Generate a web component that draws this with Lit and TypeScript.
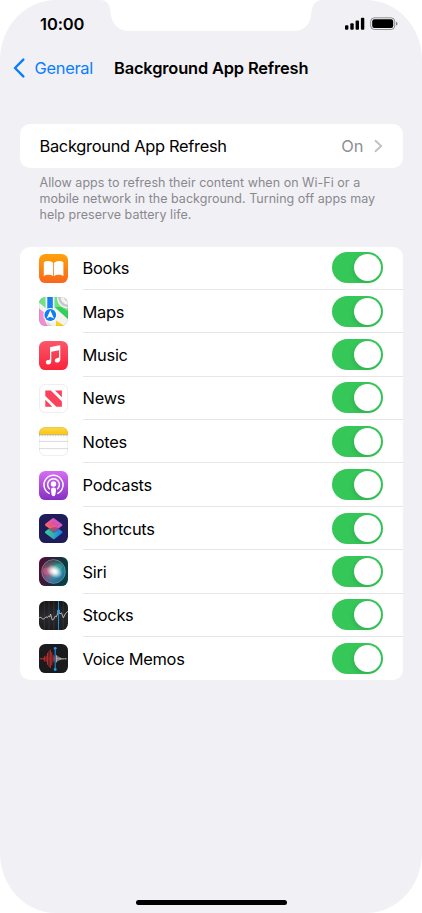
import { LitElement, html, svg, css, TemplateResult } from 'lit';
import { customElement, property, state } from 'lit/decorators.js';

interface AppEntry {
  name: string;
  icon: TemplateResult;
  enabled: boolean;
}

const books = svg`
  <defs>
    <linearGradient id="g" x2="0" y2="1">
      <stop stop-color="#ffa30a"/><stop offset="1" stop-color="#f9661c"/>
    </linearGradient>
  </defs>
  <rect width="29" height="29" rx="6.4" fill="url(#g)"/>
  <path fill="#fff" d="M14.2 9C12.7 6.9 7.3 6 4.800 8.400V22C7.600 20.200 12 20.500 14.200 22.200Z"/>
  <path fill="#fff" d="M15 9C16.500 6.900 21.900 6 24.400 8.400V22C21.600 20.200 17.200 20.500 15 22.200Z"/>`;

const maps = svg`
  <defs><clipPath id="c"><rect width="29" height="29" rx="6.4"/></clipPath></defs>
  <g clip-path="url(#c)">
    <rect width="29" height="29" fill="#f3f3f1"/>
    <path fill="#72e085" d="M0 0H6.5V11L0 5.5Z"/>
    <path fill="#72e085" d="M15.5 0H18C18 7 22 11 29 11.5V22L15.5 10Z"/>
    <path fill="#34cf59" d="M15.5 10L29 22V14.5L22 10Z"/>
    <path fill="none" stroke="#c6c9cc" stroke-width="2.6" d="M20.3 0C20.6 5 24 8.6 29 9"/>
    <path fill="#d4d6d8" d="M25 0H29V4.5Q25.5 4 25 0Z"/>
    <path fill="#ee8fd0" d="M0 11.5L6 16V24L9 29H0Z"/>
    <path fill="#ffcf15" d="M17 29V23.5L25.5 29Z"/>
    <path fill="#d9dbde" d="M8 24L13 29H9Z"/>
    <path fill="#1680f5" d="M8.3 0H13.8V13H8.3Z"/>
    <circle cx="11.3" cy="18" r="7" fill="#fff"/>
    <circle cx="11.3" cy="18" r="5.9" fill="#117df5"/>
    <path fill="#fff" d="M11.3 13.3L15 21.6L11.3 19.7L7.6 21.6Z"/>
  </g>
  <rect x=".25" y=".25" width="28.5" height="28.5" rx="6.2" fill="none" stroke="#000" stroke-opacity=".12" stroke-width=".5"/>`;

const music = svg`
  <defs>
    <linearGradient id="g" x2="0" y2="1">
      <stop stop-color="#fb5769"/><stop offset="1" stop-color="#fa233b"/>
    </linearGradient>
  </defs>
  <rect width="29" height="29" rx="6.4" fill="url(#g)"/>
  <path fill="#fff" d="M11 7.1Q11 6.2 11.9 6L20.4 4.3Q21.3 4.2 21.3 5.1V18.2C21.3 20.6 19.8 21.6 18 21.6C15 21.6 15 17.6 18 17.2C19.4 17 20 16.8 20 15.8V9.2L12.3 10.8V20C12.3 22.4 11 23.5 9 23.5C6.1 23.5 6.1 19.5 9 19.1C10.5 18.9 11 18.7 11 17.7Z"/>`;

const news = svg`
  <rect x=".35" y=".35" width="28.3" height="28.3" rx="6.2" fill="#fff" stroke="#e4e4e7" stroke-width=".7"/>
  <path fill="#fb415b" d="M6.3 6.5H11.8L22.9 17.5V22.8H17.4L6.3 11.9Z"/>
  <path fill="#fb415b" d="M16 6.5H22.9V13.3Z"/>
  <path fill="#fb415b" d="M6.3 15.8L13.3 22.8H6.3Z"/>`;

const notes = svg`
  <defs>
    <clipPath id="c"><rect width="29" height="29" rx="6.4"/></clipPath>
    <linearGradient id="g" x2="0" y2="1">
      <stop stop-color="#f9d755"/><stop offset="1" stop-color="#fdc808"/>
    </linearGradient>
  </defs>
  <g clip-path="url(#c)">
    <rect width="29" height="29" fill="#fff"/>
    <rect width="29" height="7.4" fill="url(#g)"/>
    <path stroke="#b39a55" stroke-width=".6" d="M0 7.5H29"/>
    <path stroke="#aaa" stroke-width=".8" stroke-dasharray=".8 .8" d="M0 8.6H29"/>
    <path stroke="#d0d0d2" stroke-width=".8" d="M0 14.4H29M0 21.6H29"/>
  </g>
  <rect x=".3" y=".3" width="28.4" height="28.4" rx="6.2" fill="none" stroke="#000" stroke-opacity=".12" stroke-width=".6"/>`;

const podcasts = svg`
  <defs>
    <linearGradient id="g" x2="0" y2="1">
      <stop stop-color="#d66cf5"/><stop offset="1" stop-color="#8630c3"/>
    </linearGradient>
  </defs>
  <rect width="29" height="29" rx="6.4" fill="url(#g)"/>
  <g fill="none" stroke="#fff" stroke-width="1.5" stroke-linecap="round">
    <path d="M10.2 22.3A9.5 9.5 0 1 1 18.8 22.3"/>
    <path d="M10.4 17.8A5.9 5.9 0 1 1 18.6 17.8"/>
  </g>
  <circle cx="14.5" cy="13" r="2.7" fill="#fff"/>
  <path fill="#fff" d="M11.9 18.7Q11.9 16.6 14.5 16.6T17.1 18.7L16.4 23.6Q16.1 25.2 14.5 25.2T12.6 23.6Z"/>`;

const shortcuts = svg`
  <defs>
    <linearGradient id="g" x1=".1" y1=".4" x2="1" y2=".6">
      <stop stop-color="#35c69a"/><stop offset=".5" stop-color="#35a9b8"/><stop offset="1" stop-color="#147cf6"/>
    </linearGradient>
    <linearGradient id="h" x1=".1" y1=".8" x2=".9" y2=".2">
      <stop stop-color="#fb6658"/><stop offset=".5" stop-color="#ee589a"/><stop offset="1" stop-color="#c655d2"/>
    </linearGradient>
  </defs>
  <rect width="29" height="29" rx="6.4" fill="#1e1d5a"/>
  <path fill="url(#g)" stroke="url(#g)" stroke-width="2.4" stroke-linejoin="round" d="M7.200 18.200L14.500 12.600L22.200 18.200L14.800 24Z"/>
  <path fill="url(#h)" fill-opacity=".93" stroke="url(#h)" stroke-width="2.4" stroke-linejoin="round" d="M7.200 10.800L14.300 5.200L22.200 11L14.800 16.400Z"/>
  <path fill="#5b3a76" fill-opacity=".5" d="M8.500 14.800L15.500 13L22.200 14.400L15 19.200Z"/>`;

const siri = svg`
  <defs>
    <linearGradient id="g" x2="1" y2=".2">
      <stop stop-color="#5b0b32"/><stop offset=".48" stop-color="#28233c"/><stop offset="1" stop-color="#073f45"/>
    </linearGradient>
    <linearGradient id="h" x1="0" y1=".4" x2="1" y2=".6">
      <stop stop-color="#b51d55"/><stop offset=".38" stop-color="#ce7599"/>
      <stop offset=".55" stop-color="#5bb6c7"/><stop offset="1" stop-color="#1577aa"/>
    </linearGradient>
    <linearGradient id="t" x2="0" y2="1">
      <stop stop-color="#173337" stop-opacity=".85"/><stop offset=".48" stop-color="#217a70" stop-opacity=".25"/>
      <stop offset="1" stop-color="#1c5295" stop-opacity=".75"/>
    </linearGradient>
    <radialGradient id="r">
      <stop stop-color="#fff"/><stop offset=".3" stop-color="#fff" stop-opacity=".85"/><stop offset="1" stop-color="#fff" stop-opacity="0"/>
    </radialGradient>
  </defs>
  <rect width="29" height="29" rx="6.4" fill="url(#g)"/>
  <circle cx="14.5" cy="14.5" r="11.8" fill="url(#h)"/>
  <circle cx="14.5" cy="14.5" r="11.8" fill="url(#t)"/>
  <path fill="#43dca1" fill-opacity=".3" d="M14 14C14 8 18 5 23 8C25 11 22 14 15 15Z"/>
  <path fill="#f06296" fill-opacity=".4" d="M14 15C10 10 6 9 4 13C4 18 8 20 14 15Z"/>
  <ellipse cx="15.5" cy="14.5" rx="8.5" ry="6.2" fill="url(#r)" transform="rotate(28 15.5 14.5)"/>
  <circle cx="14.5" cy="14.5" r="11.9" fill="none" stroke="#9fb5b5" stroke-opacity=".7" stroke-width=".7"/>`;

const stocks = svg`
  <defs>
    <linearGradient id="g" x2="0" y2="1">
      <stop stop-color="#161618"/><stop offset=".5" stop-color="#29292b"/><stop offset="1" stop-color="#1c1c1e"/>
    </linearGradient>
  </defs>
  <rect width="29" height="29" rx="6.4" fill="url(#g)"/>
  <path stroke="#454547" stroke-width=".5" d="M5.3 0V29M10 0V29M14.8 0V29M24.2 0V29"/>
  <path fill="none" stroke="#d0d0d2" stroke-width=".8" d="M0 16.8L2 16.2L3.6 18.2L5.4 17.6L7 15.8L8.4 16.6L9.6 15L10.8 16L11.6 13L13.2 19L14.6 18.4L16.2 15.2L17.4 15.8L19.5 10.2L21 13L22.4 11.8L24.3 16.8L26.6 12.4L29 10.2"/>
  <path stroke="#1ca2f2" stroke-width=".85" d="M19.5 0V29"/>
  <circle cx="19.5" cy="10" r="1.6" fill="#1ca2f2"/>`;

const voiceMemos = svg`
  <rect width="29" height="29" rx="6.4" fill="#1b1b1d"/>
  <path stroke="#c9302f" stroke-width=".9" d="M1.2 14.2V15.2M2.7 14V15.5M4.2 13.6V15.8M5.6 12.3V17.3M7.1 11.6V18M8.5 8.8V20.8M10 6.9V22.8M11.4 5.6V24M12.8 8.4V21.3M14.2 11V18.6M15.3 12.3V17.2"/>
  <path stroke="#bf302f" stroke-width=".5" d="M1 14.8H16"/>
  <path stroke="#c4c4c6" stroke-width=".9" d="M17.6 11.2V18.4M18.9 12.2V17.2M20.2 13.2V16.3M21.6 13.7V15.8M23 14V15.6M24.8 14.3V15.3M26.5 14.3V15.3"/>
  <path stroke="#c4c4c6" stroke-width=".5" d="M17 14.8H28.2"/>
  <path stroke="#1b9df0" stroke-width="1" d="M16.2 4V25.6"/>
  <circle cx="16.2" cy="4.3" r="1.4" fill="#1b9df0"/>
  <circle cx="16.2" cy="25.5" r="1.4" fill="#1b9df0"/>`;

@customElement('app-toggle')
export class AppToggle extends LitElement {
  @property({ type: Boolean, reflect: true }) on = false;

  static styles = css`
    :host {
      box-sizing: border-box;
      display: flex;
      width: 51px;
      height: 31px;
      padding: 2px;
      border-radius: 16px;
      background: #e9e9eb;
    }

    :host([on]) {
      justify-content: flex-end;
      background: #36c759;
    }

    .knob {
      width: 27px;
      height: 27px;
      border-radius: 50%;
      background: #fff;
      box-shadow: -1px 2px 5px rgba(0, 0, 0, 0.12);
    }
  `;

  render() {
    return html`<div class="knob"></div>`;
  }
}

@customElement('app-row')
export class AppRow extends LitElement {
  @property({ attribute: false }) entry!: AppEntry;

  static styles = css`
    :host {
      display: flex;
      align-items: center;
      height: 43.37px;
      padding-left: 19.5px;
    }

    .icon {
      width: 29px;
      height: 29px;
      flex: none;
    }

    .content {
      box-sizing: border-box;
      display: flex;
      flex: 1;
      align-items: center;
      justify-content: space-between;
      height: 100%;
      margin-left: 14.6px;
      padding-right: 19.7px;
      border-bottom: 1px solid #e6e6e8;
    }

    :host(:last-child) .content {
      border-bottom-color: transparent;
    }

    .name {
      padding-top: 1px;
    }
  `;

  render() {
    return html`
      <svg class="icon" viewBox="0 0 29 29">${this.entry.icon}</svg>
      <div class="content">
        <span class="name">${this.entry.name}</span>
        <app-toggle
          ?on=${this.entry.enabled}
          @click=${() => this.dispatchEvent(new CustomEvent('toggle-app'))}
        ></app-toggle>
      </div>
    `;
  }
}

@customElement('app-root')
export class AppRoot extends LitElement {
  @state() private apps: AppEntry[] = [
    { name: 'Books', icon: books, enabled: true },
    { name: 'Maps', icon: maps, enabled: true },
    { name: 'Music', icon: music, enabled: true },
    { name: 'News', icon: news, enabled: true },
    { name: 'Notes', icon: notes, enabled: true },
    { name: 'Podcasts', icon: podcasts, enabled: true },
    { name: 'Shortcuts', icon: shortcuts, enabled: true },
    { name: 'Siri', icon: siri, enabled: true },
    { name: 'Stocks', icon: stocks, enabled: true },
    { name: 'Voice Memos', icon: voiceMemos, enabled: true },
  ];

  static styles = css`
    :host {
      display: block;
      background: #fff;
      color: #000;
      font-family: Inter, "Liberation Sans", sans-serif;
      font-size: 16.4px;
      letter-spacing: -0.28px;
      line-height: 20px;
    }

    .screen {
      position: relative;
      box-sizing: border-box;
      display: flex;
      flex-direction: column;
      height: 913px;
      padding: 0 19.5px 8px;
      overflow: hidden;
      border-radius: 56px / 60px;
      background: #f1f0f5;
    }

    .notch {
      position: absolute;
      top: 0;
      left: 100px;
      width: 223px;
      height: 31px;
    }

    .status {
      display: flex;
      align-items: center;
      justify-content: space-between;
      height: 48px;
      padding: 0 5px 0 20.5px;
    }

    .time {
      font-size: 16.5px;
      font-weight: 600;
      letter-spacing: -0.1px;
    }

    .indicators {
      width: 53px;
      height: 14px;
    }

    .nav {
      display: flex;
      align-items: center;
      height: 40px;
      margin-left: -7px;
    }

    .back {
      width: 12px;
      height: 20px;
    }

    .parent {
      width: 79.5px;
      margin-left: 10px;
      color: #087eff;
    }

    .title {
      font-weight: 600;
      letter-spacing: -0.14px;
      white-space: nowrap;
    }

    .card {
      border-radius: 10px;
      background: #fff;
    }

    .master {
      display: flex;
      align-items: center;
      height: 43.5px;
      margin-top: 36.3px;
      padding: 0 20px;
    }

    .value {
      margin-left: auto;
      color: #8e8e92;
      letter-spacing: 0;
    }

    .chevron {
      width: 9px;
      height: 14px;
      margin-left: 10px;
    }

    .hint {
      margin: 7.500px 20px 0;
      color: #89898d;
      font-size: 12.5px;
      letter-spacing: 0.03px;
      line-height: 15.8px;
      white-space: nowrap;
    }

    .apps {
      margin-top: 24px;
    }

    .home {
      width: 151px;
      height: 5px;
      margin: auto auto 0;
      border-radius: 3px;
      background: #000;
    }
  `;

  private toggle(entry: AppEntry) {
    this.apps = this.apps.map((a) => (a === entry ? { ...a, enabled: !a.enabled } : a));
  }

  render() {
    return html`
      <div class="screen">
        <svg class="notch" viewBox="0 0 223 31">
          <path fill="#fff" d="M0 0C7 0 10 4 10.5 12C11.5 24 18 31 30 31H193C205 31 210.5 24 211.5 12C212 4 216 0 223 0Z"/>
        </svg>
        <div class="status">
          <span class="time">10:00</span>
          <svg class="indicators" viewBox="0 0 53 14">
            <rect x="0" y="8.3" width="3.4" height="4.5" rx="1"/>
            <rect x="5.3" y="6.3" width="3.4" height="6.5" rx="1"/>
            <rect x="10.6" y="3.6" width="3.4" height="9.2" rx="1"/>
            <rect x="15.9" y=".8" width="3.4" height="12" rx="1"/>
            <rect x="25.7" y=".8" width="24" height="11.7" rx="3.6" fill="none" stroke="#000" stroke-opacity=".4"/>
            <rect x="27.2" y="2.3" width="21" height="8.7" rx="2.2"/>
            <path d="M51 4.8Q52.5 5.3 52.5 6.65T51 8.5Z" fill-opacity=".45"/>
          </svg>
        </div>
        <div class="nav">
          <svg class="back" viewBox="0 0 12 20">
            <path d="M10.3 1.600L2 10L10.3 18.4" fill="none" stroke="#087eff" stroke-width="2.4" stroke-linecap="round" stroke-linejoin="round"/>
          </svg>
          <span class="parent">General</span>
          <span class="title">Background App Refresh</span>
        </div>
        <div class="card master">
          <span>Background App Refresh</span>
          <span class="value">On</span>
          <svg class="chevron" viewBox="0 0 9 14">
            <path d="M1.500 1.800L7.200 7L1.500 12.200" fill="none" stroke="#c2c2c5" stroke-width="1.9" stroke-linecap="round" stroke-linejoin="round"/>
          </svg>
        </div>
        <div class="hint">
          Allow apps to refresh their content when on Wi-Fi or a<br />
          mobile network in the background. Turning off apps may<br />
          help preserve battery life.
        </div>
        <div class="card apps">
          ${this.apps.map(
            (entry) => html`<app-row .entry=${entry} @toggle-app=${() => this.toggle(entry)}></app-row>`
          )}
        </div>
        <div class="home"></div>
      </div>
    `;
  }
}
